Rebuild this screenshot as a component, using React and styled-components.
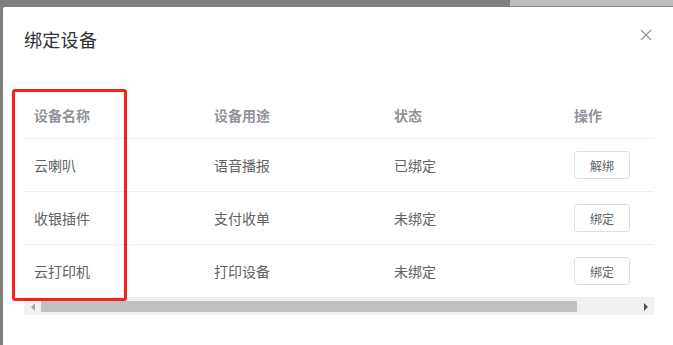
import React from 'react';
import styled, { createGlobalStyle } from 'styled-components';

const GlobalStyle = createGlobalStyle`
   html, body {
      margin: 0;
      padding: 0;
      background: #7f7f7f;
      overflow: hidden;
      font-family: "Noto Sans CJK SC", "Liberation Sans", sans-serif;
   }
`;

const Page = styled.div`
   width: 673px;
   height: 345px;
   overflow: hidden;
   display: flex;
   flex-direction: column;
`;

const TopStrip = styled.div`
   height: 7px;
   flex: none;
   display: flex;
   justify-content: flex-end;
`;

const BackdropBlock = styled.div`
   width: 163px;
   height: 6px;
   background: #bebebe;
   border-bottom: 1px solid #8c8c8c;
`;

const Dialog = styled.div`
   position: relative;
   margin-left: 3px;
   width: 700px;
   flex: 1;
   background: #fff;
   border-radius: 2px 0 0 0;
   padding: 20px 0 0 21px;
   box-sizing: border-box;
`;

const Header = styled.div`
   display: flex;
   align-items: flex-start;
   width: 630px;
   height: 24px;
   justify-content: space-between;
`;

const Title = styled.h2`
   margin: 0;
   font-size: 18px;
   line-height: 24px;
   font-weight: normal;
   color: #303133;
   letter-spacing: 0.3px;
`;

const Close = styled.button`
   width: 14px;
   height: 14px;
   padding: 0;
   margin: 1px 1px 0 0;
   border: none;
   background: none;
   display: flex;
   align-items: center;
   justify-content: center;
`;

const TableWrap = styled.div`
   margin-top: 39px;
   width: 630px;
`;

const Viewport = styled.div`
   width: 630px;
   overflow: hidden;
`;

const Table = styled.div`
   width: 720px;
`;

const Row = styled.div`
   display: grid;
   grid-template-columns: repeat(4, 180px);
   height: ${(p) => (p.head ? '48px' : '52px')};
   border-bottom: 1px solid #ebeef5;
   align-items: center;
`;

const Cell = styled.div`
   padding-left: 10px;
   font-size: 14px;
   color: ${(p) => (p.head ? '#909399' : '#606266')};
   font-weight: ${(p) => (p.head ? 600 : 400)};
   padding-top: ${(p) => (p.head ? '1px' : '0')};
`;

const ActionButton = styled.button`
   width: 56px;
   height: 28px;
   border: 1px solid #dcdfe6;
   border-radius: 3px;
   background: #fff;
   color: #606266;
   font-size: 12px;
   font-family: inherit;
   padding: 0;
`;

const Scrollbar = styled.div`
   display: flex;
   align-items: center;
   height: 17px;
   background: #f1f1f1;
`;

const Arrow = styled.div`
   width: 17px;
   height: 17px;
   flex: none;
   display: flex;
   align-items: center;
   justify-content: center;
   &::after {
      content: '';
      width: 0;
      height: 0;
      border-top: 4px solid transparent;
      border-bottom: 4px solid transparent;
      ${(p) =>
         p.dir === 'left'
            ? 'border-right: 4px solid #a3a3a3;'
            : 'border-left: 4px solid #505050;'}
   }
`;

const Track = styled.div`
   flex: 1;
   height: 17px;
   display: flex;
   align-items: center;
`;

const Thumb = styled.div`
   height: 11px;
   background: #c1c1c1;
`;

const Highlight = styled.div`
   position: absolute;
   left: 9px;
   top: 82px;
   width: 115px;
   height: 212px;
   border: 3px solid #f5221b;
   border-radius: 3px;
   box-sizing: border-box;
`;

const devices = [
   { name: '云喇叭', use: '语音播报', status: '已绑定', action: '解绑' },
   { name: '收银插件', use: '支付收单', status: '未绑定', action: '绑定' },
   { name: '云打印机', use: '打印设备', status: '未绑定', action: '绑定' },
];

const App = () => {
   return (
      <Page>
         <GlobalStyle />
         <TopStrip>
            <BackdropBlock />
         </TopStrip>
         <Dialog>
            <Header>
               <Title>绑定设备</Title>
               <Close aria-label="close">
                  <svg width="12" height="12" viewBox="0 0 12 12">
                     <path d="M1 1L11 11M11 1L1 11" stroke="#909399" strokeWidth="1.2" />
                  </svg>
               </Close>
            </Header>
            <TableWrap>
               <Viewport>
                  <Table>
                     <Row head>
                        <Cell head>设备名称</Cell>
                        <Cell head>设备用途</Cell>
                        <Cell head>状态</Cell>
                        <Cell head>操作</Cell>
                     </Row>
                     {devices.map((d) => (
                        <Row key={d.name}>
                           <Cell>{d.name}</Cell>
                           <Cell>{d.use}</Cell>
                           <Cell>{d.status}</Cell>
                           <Cell>
                              <ActionButton>{d.action}</ActionButton>
                           </Cell>
                        </Row>
                     ))}
                  </Table>
               </Viewport>
               <Scrollbar>
                  <Arrow dir="left" />
                  <Track>
                     <Thumb style={{ width: `${(630 / 700) * 596}px` }} />
                  </Track>
                  <Arrow dir="right" />
               </Scrollbar>
            </TableWrap>
            <Highlight />
         </Dialog>
      </Page>
   );
};

export default App;
